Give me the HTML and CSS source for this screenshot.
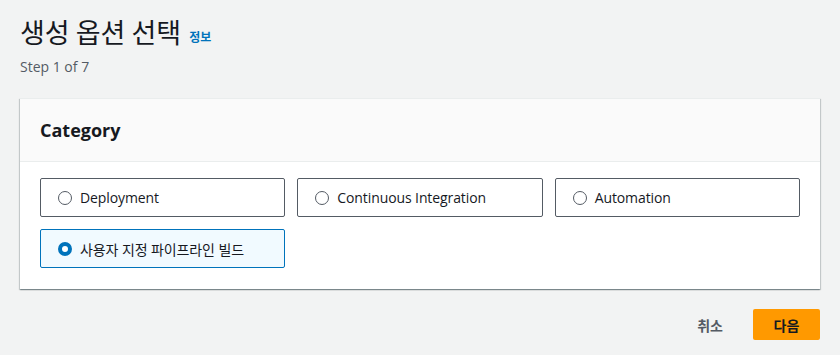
FILE: index.html
```html
<!DOCTYPE html>
<html>

<head>
    <title>생성 옵션 선택</title>
    <link rel="stylesheet" href="styles.css">
</head>

<body>
    <div class="page">
        <div class="page-header">
            <h1>생성 옵션 선택 <a href="#" class="info-link">정보</a></h1>
            <div class="step">Step 1 of 7</div>
        </div>

        <div class="card">
            <div class="card-header">
                <h2>Category</h2>
            </div>
            <div class="card-body">
                <div class="tiles">
                    <label class="tile">
                        <span class="radio"></span>
                        <span class="tile-label">Deployment</span>
                    </label>
                    <label class="tile">
                        <span class="radio"></span>
                        <span class="tile-label">Continuous Integration</span>
                    </label>
                    <label class="tile">
                        <span class="radio"></span>
                        <span class="tile-label">Automation</span>
                    </label>
                    <label class="tile selected">
                        <span class="radio"></span>
                        <span class="tile-label">사용자 지정 파이프라인 빌드</span>
                    </label>
                </div>
            </div>
        </div>

        <div class="actions">
            <button class="btn-link">취소</button>
            <button class="btn-primary">다음</button>
        </div>
    </div>
</body>

</html>
```

FILE: styles.css
```css
body {
    background-color: #f2f3f3;
    margin: 0;
    font-family: "Open Sans", "Noto Sans CJK KR", sans-serif;
    color: #16191f;
}

.page {
    padding: 12px 20px 0 20px;
}

h1 {
    margin: 0;
    font-size: 27px;
    font-weight: 400;
    line-height: 40px;
    font-family: "Noto Sans CJK KR", sans-serif;
}

.info-link {
    font-size: 12px;
    font-weight: 700;
    color: #0073bb;
    text-decoration: none;
    vertical-align: 1px;
    margin-left: 2px;
}

.step {
    margin-top: 0;
    font-size: 14px;
    color: #545b64;
}

.card {
    margin-top: 22px;
    background-color: #fff;
    box-shadow: 0 1px 1px 0 rgba(0, 28, 36, 0.3), 1px 1px 1px 0 rgba(0, 28, 36, 0.15), -1px 1px 1px 0 rgba(0, 28, 36, 0.15);
    border-top: 1px solid #eaeded;
}

.card-header {
    background-color: #fafafa;
    border-bottom: 1px solid #eaeded;
    padding: 0 20px;
    height: 62px;
    display: flex;
    align-items: center;
}

h2 {
    margin: 0;
    font-size: 18px;
    font-weight: 700;
}

.card-body {
    padding: 16px 20px 21px 20px;
}

.tiles {
    display: grid;
    grid-template-columns: repeat(3, 1fr);
    gap: 12px;
}

.tile {
    height: 39px;
    box-sizing: border-box;
    border: 1px solid #545b64;
    border-radius: 2px;
    display: flex;
    align-items: center;
    padding-left: 17px;
    font-size: 14px;
    letter-spacing: -0.1px;
    cursor: pointer;
}

.radio {
    width: 14px;
    height: 14px;
    box-sizing: border-box;
    border: 1px solid #545b64;
    border-radius: 50%;
    margin-right: 8px;
    background-color: #fff;
}

.tile.selected {
    background-color: #f1faff;
    border-color: #0073bb;
}

.tile.selected .radio {
    border: 4px solid #0073bb;
}

.actions {
    display: flex;
    justify-content: flex-end;
    align-items: center;
    margin-top: 20px;
    gap: 20px;
}

.btn-link {
    background: none;
    border: none;
    font-family: "Noto Sans CJK KR", sans-serif;
    font-size: 14px;
    font-weight: 700;
    color: #545b64;
    padding: 0 10px;
}

.btn-primary {
    background-color: #ff9900;
    border: none;
    border-radius: 2px;
    width: 67px;
    height: 31px;
    font-family: "Noto Sans CJK KR", sans-serif;
    font-size: 14px;
    font-weight: 700;
    color: #16191f;
}
```
